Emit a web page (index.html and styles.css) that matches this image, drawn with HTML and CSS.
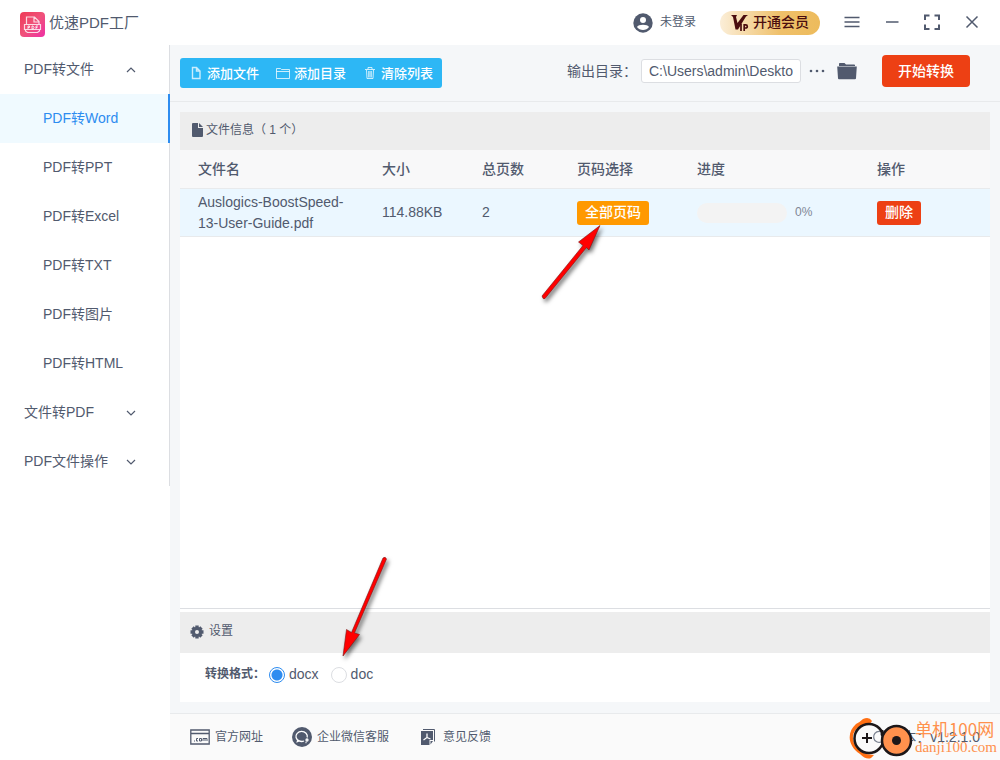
FILE: index.html
```html
<!DOCTYPE html>
<html lang="zh-CN">
<head>
<meta charset="utf-8">
<meta name="viewport" content="width=device-width, initial-scale=1">
<title>优速PDF工厂</title>
<link rel="stylesheet" href="styles.css">
</head>
<body>
<div class="app">
  <header class="titlebar">
    <svg class="logo" width="25" height="25" viewBox="0 0 25 25" aria-hidden="true">
      <defs><linearGradient id="lg" x1="0" y1="0" x2="1" y2="1"><stop offset="0" stop-color="#ee3a55"/><stop offset=".5" stop-color="#f0527a"/><stop offset="1" stop-color="#ee2fa6"/></linearGradient></defs>
      <rect width="25" height="25" rx="4" fill="url(#lg)"/>
      <g fill="none" stroke="#fff" stroke-opacity=".8" stroke-width="1.200">
        <path d="M6.500 12V5h8l4.500 4.500V12M14 5v5h5M4.500 12.500h16v5h-16zM5.500 17.500v1.500l2 1.500h10l2-1.500v-1.500"/>
        <path d="M8 17v-3h1.500v1.500H8M12 14v3h1l1-1.500-1-1.500zM18 14h-2v3M16 15.500h1.500" stroke-width="1"/>
      </g>
    </svg>
    <h1 class="brand">优速PDF工厂</h1>
    <button class="user">
      <svg width="20" height="20" viewBox="0 0 20 20" aria-hidden="true"><circle cx="10" cy="10" r="9.700" fill="#515a6e"/><circle cx="10" cy="7" r="3" fill="#fff"/><path d="M4 14c1.200-3 10.800-3 12 0-2.500 4-9.500 4-12 0z" fill="#fff"/></svg>
      <span>未登录</span>
    </button>
    <button class="vip">
      <svg width="18" height="18" viewBox="0 0 18 18" aria-hidden="true"><path d="M0 1h6L5 3l1.500 6L12.500 1H17l-2 1.500L7 15.500H4.500L2 3z" fill="#4a0d0f"/><path d="M10 10v7M13.200 17v-6.200h1.500a1.500 1.500 0 0 1 0 3.200h-1.500" fill="none" stroke="#4a0d0f" stroke-width="1.700"/></svg>
      <span>开通会员</span>
    </button>
    <div class="window-controls">
      <button aria-label="菜单"><svg width="16" height="16" viewBox="0 0 16 16"><path d="M.5 2.500h15M.5 7h15M.5 11.500h15"/></svg></button>
      <button aria-label="最小化"><svg width="16" height="16" viewBox="0 0 16 16"><path d="M2 7h12.500"/></svg></button>
      <button aria-label="最大化"><svg width="16" height="16" viewBox="0 0 16 16"><path class="heavy" d="M1 5V.5h4.500M10.500 .5H15V5M15 9.500V14h-4.500M5.500 14H1V9.500"/></svg></button>
      <button aria-label="关闭"><svg width="16" height="16" viewBox="0 0 16 16"><path d="M2.500 1.500l11 11M13.500 1.500l-11 11"/></svg></button>
    </div>
  </header>

  <div class="body">
    <aside class="sidebar">
      <nav class="menu">
        <button class="menu-group" aria-expanded="true">PDF转文件<svg width="10" height="6" viewBox="0 0 10 6"><path d="M1 5l4-4 4 4"/></svg></button>
        <a class="menu-item active" href="#">PDF转Word</a>
        <a class="menu-item" href="#">PDF转PPT</a>
        <a class="menu-item" href="#">PDF转Excel</a>
        <a class="menu-item" href="#">PDF转TXT</a>
        <a class="menu-item" href="#">PDF转图片</a>
        <a class="menu-item" href="#">PDF转HTML</a>
        <button class="menu-group" aria-expanded="false">文件转PDF<svg width="10" height="6" viewBox="0 0 10 6"><path d="M1 1l4 4 4-4"/></svg></button>
        <button class="menu-group" aria-expanded="false">PDF文件操作<svg width="10" height="6" viewBox="0 0 10 6"><path d="M1 1l4 4 4-4"/></svg></button>
      </nav>
    </aside>

    <main class="main">
      <div class="toolbar">
        <div class="file-actions">
          <button><svg width="14" height="14" viewBox="0 0 14 14"><path stroke-width="1.400" d="M3.500 1.500h4l3.500 3.500v7.500H3.500zM7.500 1.500V5H11"/></svg>添加文件</button>
          <button><svg width="14" height="14" viewBox="0 0 14 14"><path d="M.5 12.500V2.500h4l1 1h8v9zM.5 5.500h13"/></svg>添加目录</button>
          <button><svg width="14" height="14" viewBox="0 0 14 14"><path d="M2 3.500h10M5 3.500v-2h4v2M3.500 4l.5 8.500h6l.5-8.500M5.700 5v6.500M7 5v6.500M8.300 5v6.500"/></svg>清除列表</button>
        </div>
        <div class="output">
          <label for="outdir">输出目录：</label>
          <input id="outdir" class="path" type="text" value="C:\Users\admin\Desktop">
          <button class="dots" aria-label="更多"><svg width="16" height="4" viewBox="0 0 16 4" fill="#515a6e"><circle cx="2" cy="2" r="1.300"/><circle cx="8" cy="2" r="1.300"/><circle cx="14" cy="2" r="1.300"/></svg></button>
          <button class="folder" aria-label="打开目录"><svg width="20" height="18" viewBox="0 0 20 18" fill="#515a6e"><path d="M2 4V1.800Q2 1 2.800 1h4.700l1.500 1.500h8.200q.8 0 .8.800V4z"/><path d="M.2 4.600h19.600L19 16.300q0 .9-1 .9H2q-1 0-1-.9z"/></svg></button>
          <button class="start">开始转换</button>
        </div>
      </div>

      <section class="files">
        <h2 class="files-title"><svg width="11" height="14" viewBox="0 0 11 14"><path d="M0 1q0-1 1-1h5v5h5v8q0 1-1 1H1q-1 0-1-1zM7 0l4 4H7z" fill="#515a6e"/></svg>文件信息（ 1 个）</h2>
        <table class="file-table">
          <colgroup><col class="c-name"><col class="c-size"><col class="c-pages"><col class="c-range"><col class="c-progress"><col></colgroup>
          <thead><tr><th>文件名</th><th>大小</th><th>总页数</th><th>页码选择</th><th>进度</th><th>操作</th></tr></thead>
          <tbody><tr>
            <td>Auslogics-BoostSpeed-13-User-Guide.pdf</td>
            <td>114.88KB</td>
            <td>2</td>
            <td><button class="tag orange">全部页码</button></td>
            <td><div class="progress"><span class="track"></span><span class="percent">0%</span></div></td>
            <td><button class="tag red">删除</button></td>
          </tr></tbody>
        </table>
      </section>

      <section class="settings">
        <h2 class="settings-title"><svg width="14" height="14" viewBox="0 0 14 14"><g stroke="#515a6e" stroke-width="3.400"><path d="M7 .5v13M.5 7h13M2.500 2.500l9 9M11.500 2.500l-9 9"/></g><circle cx="7" cy="7" r="5" fill="#515a6e"/><circle cx="7" cy="7" r="2" fill="#ededed"/></svg>设置</h2>
        <div class="format" role="radiogroup" aria-labelledby="fmt">
          <span class="format-label" id="fmt">转换格式：</span>
          <label><input type="radio" name="format" checked>docx</label>
          <label><input type="radio" name="format">doc</label>
        </div>
      </section>

      <footer class="footer">
        <a href="#"><svg width="20" height="16" viewBox="0 0 20 16" fill="none" stroke="#515a6e"><path d="M.8 1h18.400v14H.8zM.8 4.500h18.400" stroke-width="1.300"/><path d="M4 12h1M8 9.500H6.500V12H8M9.500 9.500h2V12h-2zM13 12V9.500h4V12M15 9.500V12"/></svg>官方网址</a>
        <a href="#"><svg width="20" height="20" viewBox="0 0 20 20"><circle cx="10" cy="10" r="10" fill="#515a6e"/><g fill="none" stroke="#fff" stroke-width="1.300"><path d="M12 14a5.700 5 0 1 1 3.200-3.500M6 12.500l-.7 2.200 2.500-1"/><circle cx="15" cy="13" r="1"/><path d="M13.500 15.500h1"/></g></svg>企业微信客服</a>
        <a href="#"><svg width="20" height="18" viewBox="-2 0 20 18"><path d="M3 1.500h11.500v12" fill="none" stroke="#515a6e"/><path d="M1 3h12v9h-3.500v5H1zM10.500 13H13l-2.500 3.500z" fill="#515a6e"/><path d="M7 5.500v4l-3.500 2.500M7 9.500l3.500 1.500" fill="none" stroke="#fff" stroke-width="1.300"/></svg>意见反馈</a>
        <span class="version"><svg width="14" height="14" viewBox="0 0 14 14" fill="none" stroke="#515a6e" stroke-width="1.300"><path d="M11.500 3.500A5.500 5.500 0 1 0 12.500 8M12 .5v3.500H8.500"/></svg>版本：v1.2.1.0</span>
        <div class="watermark">
          <svg width="66" height="44" viewBox="0 0 66 44" aria-hidden="true">
            <path d="M11 38C-2 29-2 16 7 8q4-2 7-5 6-3 9 2l-2 3C11 8 5 13 4 20q-1 12 13 18l8 1-3 3q-5 2-11-4z" fill="#ff6f13"/>
            <circle cx="20" cy="22.500" r="14.500" fill="#fafafa" fill-opacity=".25" stroke="#1c1719" stroke-width="2.500"/>
            <path d="M18 17v10M13 22h10" stroke="#1c1719" stroke-width="2"/>
            <path d="M33 14v5q2 4 6 0l3-4" fill="none" stroke="#1c1719" stroke-width="2.500"/>
            <circle cx="47.500" cy="24.500" r="14.500" fill="#ff914d" stroke="#1c1719" stroke-width="2.500"/>
            <circle cx="47.500" cy="24.500" r="4.500" fill="#1c1719"/>
          </svg>
          <div class="watermark-text"><span class="wm-name">单机100网</span><span class="wm-url">danji100.com</span></div>
        </div>
      </footer>
    </main>
  </div>

  <svg class="arrow arrow-range" width="70" height="85" viewBox="0 0 70 85" aria-hidden="true"><path d="M3 76L44 25.500 39.500 22 61 5.500 50 30 47.500 27.500 6 78.500Q4 80 3 76z" fill="#f00" stroke="#7a1414" stroke-width=".6"/></svg>
  <svg class="arrow arrow-format" width="60" height="110" viewBox="0 0 60 110" aria-hidden="true"><path d="M44 7Q46.500 5 47.500 8L15.500 82l5 1.500L4 105 7.500 78.500l5 3z" fill="#f00" stroke="#7a1414" stroke-width=".6"/></svg>
</div>
</body>
</html>
```
FILE: styles.css
```css
* { box-sizing: border-box; }

body {
  margin: 0;
  color: #515a6e;
  font: 14px/21px "Liberation Sans", "Noto Sans CJK SC", sans-serif;
}

button {
  margin: 0;
  padding: 0;
  border: 0;
  background: none;
  color: inherit;
  font: inherit;
  cursor: pointer;
}

a { color: inherit; text-decoration: none; }
h1, h2 { margin: 0; font-weight: 400; }
svg { flex: none; }

.app {
  position: relative;
  display: flex;
  flex-direction: column;
  min-height: 100vh;
  background: #fff;
}

/* Title bar */
.titlebar {
  display: flex;
  align-items: center;
  height: 45px;
  padding: 0 8px 0 20px;
}
.logo { margin-top: 3px; }
.brand { margin: 0 auto 0 4px; font-size: 15px; }
.user {
  display: flex;
  align-items: center;
  gap: 7px;
  margin-right: 24px;
  font-size: 12px;
}
.vip {
  display: flex;
  align-items: center;
  gap: 4px;
  height: 24px;
  margin-right: 12px;
  padding: 0 11px;
  border-radius: 12px;
  background: linear-gradient(90deg, #fbeed8, #efc06a 60%, #edbb5c);
  color: #4a0d0f;
  font-size: 14px;
  font-weight: 500;
}
.window-controls { display: flex; }
.window-controls button {
  display: flex;
  align-items: center;
  justify-content: center;
  width: 40px;
  height: 42px;
}
.window-controls path { fill: none; stroke: #515a6e; stroke-width: 1.5; }
.window-controls .heavy { stroke-width: 2; }
.window-controls svg { overflow: visible; }

/* Sidebar */
.body { display: flex; flex: 1; }
.sidebar { flex: none; width: 170px; }
.menu {
  display: flex;
  flex-direction: column;
  border-right: 1px solid #dcdee2;
}
.menu-group, .menu-item { display: flex; align-items: center; height: 49px; }
.menu-group { justify-content: space-between; padding: 0 33px 0 24px; }
.menu-group path { fill: none; stroke: #515a6e; stroke-width: 1.2; }
.menu-item { padding-left: 43px; }
.menu-item.active {
  margin-right: -1px;
  border-right: 2px solid #2d8cf0;
  background: #f0faff;
  color: #2d8cf0;
}

/* Toolbar */
.main {
  display: flex;
  flex: 1;
  flex-direction: column;
  min-width: 0;
  background: #f5f7f9;
}
.toolbar {
  display: flex;
  align-items: flex-start;
  justify-content: space-between;
  padding: 10px 30px 14px 10px;
  border-bottom: 1px solid #e8eaec;
}
.file-actions {
  display: flex;
  gap: 17px;
  height: 30px;
  margin: 3px 0 -1px;
  padding: 0 9px;
  border-radius: 3px;
  background: #2db7f5;
  color: #fff;
  font-size: 13px;
  font-weight: 500;
}
.file-actions button { display: flex; align-items: center; gap: 4px; }
.file-actions path { fill: none; stroke: #fff; stroke-opacity: .75; }
.output { display: flex; align-items: center; }
.path {
  width: 160px;
  height: 24px;
  margin: 0 8px 0 4px;
  padding: 0 7px;
  border: 1px solid #dcdee2;
  border-radius: 3px;
  background: #fff;
  color: #515a6e;
  font: inherit;
}
.dots, .folder { display: flex; }
.dots { margin-right: 12px; }
.folder { margin-right: 25px; }
.start {
  width: 88px;
  height: 32px;
  border-radius: 4px;
  background: #ed4014;
  color: #fff;
  font-weight: 500;
}

/* File list */
.files {
  flex: 1;
  margin: 10px 10px 0;
  border-bottom: 1px solid #dcdee2;
  background: #fff;
}
.files-title, .settings-title {
  display: flex;
  align-items: center;
  background: #ededed;
  font-size: 12px;
}
.files-title {
  gap: 3px;
  height: 38px;
  padding: 0 12px 2px;
}
.file-table {
  width: 100%;
  border-collapse: separate;
  border-spacing: 0;
  table-layout: fixed;
  text-align: left;
}
.file-table th, .file-table td { padding: 0 18px; border-bottom: 1px solid #e8eaec; }
.file-table th { height: 39px; background: #f8f8f9; font-weight: 500; }
.file-table td { height: 48px; background: #ebf7ff; }
.c-name { width: 184px; }
.c-size { width: 100px; }
.c-pages { width: 95px; }
.c-range { width: 120px; }
.c-progress { width: 180px; }
.tag {
  display: block;
  height: 24px;
  padding: 0 8px;
  border-radius: 3px;
  color: #fff;
  font-weight: 500;
}
.orange { background: #f90; }
.red { background: #ed4014; }
.progress { display: flex; align-items: center; gap: 8px; }
.track { width: 90px; height: 20px; border-radius: 10px; background: #f3f3f3; }
.percent { color: #808695; font-size: 12px; }

/* Settings */
.settings {
  margin: 0 10px 11px;
  border-top: 3px solid #fff;
  background: #fff;
}
.settings-title { gap: 5px; height: 41px; padding: 0 10px 2px; }
.format {
  display: flex;
  align-items: center;
  height: 49px;
  padding: 0 25px 6px;
}
.format-label { margin-right: 4px; font-size: 12px; font-weight: 700; }
.format label { display: flex; align-items: center; gap: 4px; margin-right: 12px; }
.format input {
  width: 16px;
  height: 16px;
  margin: 0;
  border: 1px solid #dcdee2;
  border-radius: 50%;
  background: #fff;
  appearance: none;
}
.format input:checked {
  border-color: #2d8cf0;
  background: radial-gradient(circle, #2d8cf0 5px, #fff 6px);
}

/* Footer */
.footer {
  position: relative;
  display: flex;
  align-items: center;
  gap: 29px;
  height: 47px;
  padding: 0 20px;
  border-top: 1px solid #e8eaec;
  background: #fafafa;
  font-size: 12px;
}
.footer a { display: flex; align-items: center; gap: 5px; }
.version {
  display: flex;
  align-items: center;
  gap: 2px;
  margin-left: auto;
  font-size: 14px;
}
.watermark {
  position: absolute;
  right: 3px;
  bottom: 0;
  display: flex;
  align-items: center;
  color: #ff914d;
}
.watermark-text { display: flex; flex-direction: column; }
.wm-name { font: 17px/18px "Noto Sans CJK SC", sans-serif; }
.wm-url { font: 15px/18px "Liberation Serif", serif; }

/* Annotation arrows */
.arrow {
  position: absolute;
  pointer-events: none;
  filter: drop-shadow(2px 3px 2px rgba(0, 0, 0, .55));
}
.arrow-range { left: 539px; top: 220px; }
.arrow-format { left: 339px; top: 551px; }
```
